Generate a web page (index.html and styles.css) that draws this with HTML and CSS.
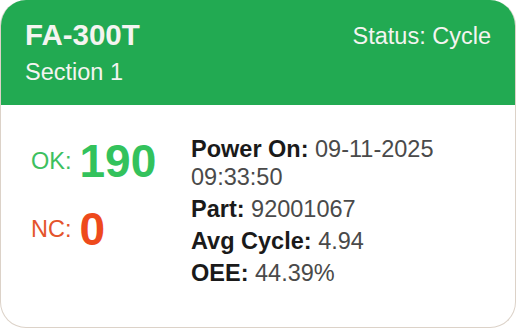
FILE: index.html
```html
<!doctype html>
<html>
 <head>
	<meta charset="UTF-8">
	<title>FA-300T</title>
	<link rel="stylesheet" href="styles.css">
 </head>
 <body>
	<div class="card">
		<div class="card_head">
			<div class="head_left">
				<div class="machine">FA-300T</div>
				<div class="section">Section 1</div>
			</div>
			<div class="status">Status: Cycle</div>
		</div>
		<div class="card_body">
			<div class="counts">
				<div class="count ok"><span>OK:</span><b>190</b></div>
				<div class="count nc"><span>NC:</span><b>0</b></div>
			</div>
			<div class="info">
				<div class="row"><b>Power On:</b> <span>09-11-2025</span> <span>09:33:50</span></div>
				<div class="row"><b>Part:</b> <span>92001067</span></div>
				<div class="row"><b>Avg Cycle:</b> <span>4.94</span></div>
				<div class="row"><b>OEE:</b> <span>44.39%</span></div>
			</div>
		</div>
	</div>
 </body>
</html>
```
FILE: styles.css
```css
html,body{margin:0;padding:0;background:#fff}
body{font-family:"Liberation Sans",Arial,sans-serif}

.card{
	width:516px;height:328px;
	box-sizing:border-box;
	border-radius:26px;
	border:1px solid #dcd2c8;
	border-top:none;
	overflow:hidden;
	background:#fff;
}
/* 顶部绿色标题栏 */
.card_head{
	background:#22aa52;
	color:#f4f4f0;
	height:105px;
	box-sizing:border-box;
	padding:18px 24px 0 24px;
	display:flex;
	justify-content:space-between;
	align-items:flex-start;
}
.machine{font-size:29.5px;font-weight:bold;line-height:34px}
.section{font-size:23.5px;line-height:28px;margin-top:6px}
.status{font-size:23.5px;line-height:34px;margin-top:1px}

.card_body{
	display:flex;
	padding:30px 0 0 30px;
}
.counts{width:160px;margin-top:1px}
/* 数量：标签与数字垂直居中 */
.count{display:flex;align-items:center;gap:8px;height:50px;white-space:nowrap}
.count span{font-size:23.5px}
.count b{font-size:46px;line-height:54px}
.count+.count{margin-top:18px}
.ok{color:#3cc060}
.ok b{color:#33c25c}
.nc{color:#e4542c}
.nc b{color:#ee4a1c}

.info{width:300px;font-size:23.5px;color:#4a4a4a;line-height:28px}
.info b{color:#1a1a1a}
.row{width:260px}
.row span{white-space:nowrap}
.row+.row{margin-top:4px}
```
